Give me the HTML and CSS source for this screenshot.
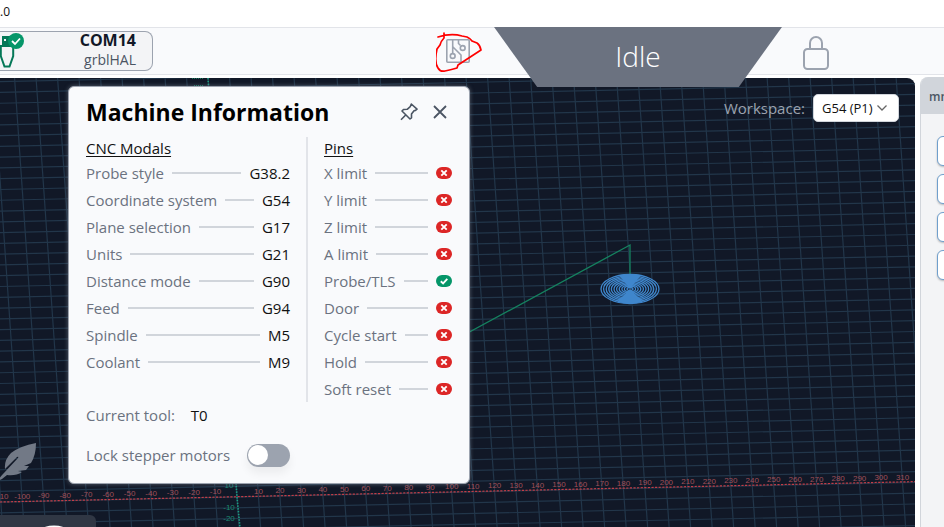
FILE: index.html
```html
<!DOCTYPE html>
<html lang="en">
<head>
<meta charset="utf-8">
<title>Machine control</title>
<link rel="stylesheet" href="styles.css">
</head>
<body>
<svg width="0" height="0" class="defs" aria-hidden="true">
  <symbol id="bad" viewBox="0 0 16 12">
    <rect width="16" height="12" rx="6" fill="#dc2626"/>
    <path d="M5.3 3.3l5.4 5.4M10.7 3.3L5.3 8.7" stroke="#fff" stroke-width="1.9" fill="none"/>
  </symbol>
  <symbol id="good" viewBox="0 0 16 12">
    <rect width="16" height="12" rx="6" fill="#059669"/>
    <path d="M4.8 6.2l2.3 2.2 4.2-4.5" stroke="#fff" stroke-width="1.9" fill="none"/>
  </symbol>
</svg>
<div class="app">
  <div class="titlebar">.0</div>
  <header class="toolbar">
    <div class="toolbar-left">
      <button class="port" type="button">
        <svg class="usb" width="26" height="38" viewBox="0 0 26 38" aria-hidden="true">
          <rect x="2" y="4" width="11" height="9" fill="#047857"/>
          <path d="M4 7h2v2H4zM9 7h2v2H9z" fill="#f3f4f6"/>
          <path d="M.8 14h12.400v10L9.500 34.500h-5L.8 24z" fill="#f3f4f6" stroke="#047857" stroke-width="2"/>
          <circle cx="16" cy="9" r="8" fill="#059669"/>
          <path d="M12 9l3 3 5-5.500" fill="none" stroke="#fff" stroke-width="1.800"/>
        </svg>
        <span class="port-text"><strong>COM14</strong><span>grblHAL</span></span>
      </button>
      <button class="circuit" type="button" aria-label="Machine information">
        <svg width="24" height="24" viewBox="0 0 24 24" fill="none" stroke="#9ca3af" stroke-width="1.600">
          <rect x=".8" y=".8" width="22.400" height="22.400" rx="1"/>
          <path d="M6.700 1v13.500M7 8l8 8v7M12.500 1v3.500l2 2"/>
          <circle cx="6.700" cy="17" r="2.400"/><circle cx="16.700" cy="9" r="2.400"/>
        </svg>
        <svg class="scribble" width="48" height="42" viewBox="0 0 48 42" fill="none" stroke="#f00" stroke-width="1.700" stroke-linecap="round" stroke-linejoin="round">
          <path d="M2 5q13-4 24-1l5 1q4 2 5 4l5 2q3 2 4 7l-23 15-1 3q-7 2-12 3-5 1-7-3-4-6-1-19l3-4q1-4 4-7V1"/>
        </svg>
      </button>
    </div>
    <div class="status">Idle</div>
    <div class="toolbar-right">
      <button class="lock" type="button" aria-label="Lock">
        <svg width="26" height="36" viewBox="0 0 26 36" fill="none" stroke="#9ca3af" stroke-width="2">
          <rect x="1" y="14" width="24" height="20" rx="3.500"/>
          <path d="M7 14V8a6 6 0 0 1 12 0v6"/>
        </svg>
      </button>
    </div>
  </header>
  <main class="main">
    <section class="viewer">
      <svg class="scene" id="scene" aria-hidden="true">
        <g id="grid" stroke="#22364a" stroke-width="1.200"></g>
        <path d="M0 424L1840 383" stroke="#c43c46" stroke-width="1.200" stroke-dasharray="2.200 1.400"/>
        <path d="M208 0L237 419L240 450" fill="none" stroke="#1b9e84" stroke-width="1.600" stroke-dasharray="1.500 1.300"/>
        <g id="ticks"></g>
        <path d="M192 .5h12M194 7.500h10" stroke="#14795e" stroke-dasharray="1 1"/>
        <path d="M440 270L630 167V196" fill="none" stroke="#15825f" stroke-width="1.300"/>
        <g id="rings" fill="none" stroke="#3f86cc" stroke-width="1.300"></g>
        <path d="M630 211L619 197Q630 195 641 197ZM630 211L617 224Q630 227 643 224Z" fill="#3f86cc"/>
      </svg>
      <div class="workspace">
        <label for="ws">Workspace:</label>
        <span class="select">
          <select id="ws"><option>G54 (P1)</option></select>
          <svg width="12" height="8" viewBox="0 0 12 8" fill="none" stroke="#666" stroke-width="1.300"><path d="M1.500 1.500L6 6l4.500-4.500"/></svg>
        </span>
      </div>
      <svg class="feather" width="37" height="38" viewBox="0 0 37 38" fill="#727986" aria-hidden="true">
        <path d="M36 0Q20 3 11 10 4 17 5 26L17 14q2-1 1 1L3 31q-5 5-3 6l2-1 5-4q9 1 15-3l-4-1 8-1 3-4-5 0 7-3Q36 12 36 0z"/>
      </svg>
      <div class="dock">
        <svg width="20" height="12" viewBox="0 0 20 12" aria-hidden="true"><ellipse cx="10" cy="15" rx="12" ry="4.500" fill="#fff"/></svg>
      </div>
      <section class="dialog" aria-labelledby="dlg-title">
        <div class="dialog-head">
          <h2 id="dlg-title">Machine Information</h2>
          <button type="button" aria-label="Pin">
            <svg width="18" height="18" viewBox="0 0 18 18" fill="none" stroke="#4b5563" stroke-width="1.600" stroke-linejoin="round"><path d="M11.300 1l5.700 5.200-1.500 1.200-1.500.3-2.500 3.300v3.800l-1.500 1.200L2 8l1.500-1.500 3.700-.2 3-2.600zM5.700 12L1 16.700"/></svg>
          </button>
          <button type="button" aria-label="Close">
            <svg width="14" height="14" viewBox="0 0 14 14" fill="none" stroke="#4b5563" stroke-width="1.800"><path d="M1 1l12 12M13 1L1 13"/></svg>
          </button>
        </div>
        <div class="columns">
          <div class="modals">
            <h3>CNC Modals</h3>
            <dl>
              <div><dt>Probe style</dt><dd>G38.2</dd></div>
              <div><dt>Coordinate system</dt><dd>G54</dd></div>
              <div><dt>Plane selection</dt><dd>G17</dd></div>
              <div><dt>Units</dt><dd>G21</dd></div>
              <div><dt>Distance mode</dt><dd>G90</dd></div>
              <div><dt>Feed</dt><dd>G94</dd></div>
              <div><dt>Spindle</dt><dd>M5</dd></div>
              <div><dt>Coolant</dt><dd>M9</dd></div>
            </dl>
          </div>
          <div class="pins">
            <h3>Pins</h3>
            <dl>
              <div><dt>X limit</dt><dd><svg><use href="#bad"/></svg></dd></div>
              <div><dt>Y limit</dt><dd><svg><use href="#bad"/></svg></dd></div>
              <div><dt>Z limit</dt><dd><svg><use href="#bad"/></svg></dd></div>
              <div><dt>A limit</dt><dd><svg><use href="#bad"/></svg></dd></div>
              <div><dt>Probe/TLS</dt><dd><svg><use href="#good"/></svg></dd></div>
              <div><dt>Door</dt><dd><svg><use href="#bad"/></svg></dd></div>
              <div><dt>Cycle start</dt><dd><svg><use href="#bad"/></svg></dd></div>
              <div><dt>Hold</dt><dd><svg><use href="#bad"/></svg></dd></div>
              <div><dt>Soft reset</dt><dd><svg><use href="#bad"/></svg></dd></div>
            </dl>
          </div>
        </div>
        <p class="tool">Current tool: <b>T0</b></p>
        <div class="motors">
          <label for="motors">Lock stepper motors</label>
          <input id="motors" type="checkbox" role="switch">
        </div>
      </section>
    </section>
    <aside class="side">
      <div class="side-head">mm</div>
      <div class="fields">
        <button type="button" aria-label="Zero X"></button>
        <button type="button" aria-label="Zero Y"></button>
        <button type="button" aria-label="Zero Z"></button>
        <button type="button" aria-label="Zero A"></button>
      </div>
    </aside>
  </main>
</div>
<script src="scene.js"></script>
</body>
</html>
```
FILE: styles.css
```css
* { box-sizing: border-box; }
body {
  margin: 0;
  font-family: "Open Sans", "Noto Sans", sans-serif;
  font-size: 15px;
  background: #fff;
  color: #111827;
}
button { border: 0; padding: 0; background: none; font: inherit; color: inherit; }
svg { display: block; }
h2, h3, p, dl, dd { margin: 0; }
.defs { position: absolute; }
.app { display: flex; flex-direction: column; height: 100vh; overflow: hidden; }
.titlebar { height: 27px; font-size: 12px; line-height: 24px; color: #111; flex: none; }

.toolbar {
  display: flex;
  flex: none;
  height: 48px;
  background: #f9fafc;
  border-top: 1px solid #e2e4e9;
  border-bottom: 1px solid #e2e4e9;
}
.toolbar-left { flex: 10 1 0; display: flex; align-items: center; justify-content: space-between; padding-right: 24px; }
.port {
  display: flex;
  align-items: center;
  justify-content: space-between;
  width: 153px;
  height: 40px;
  padding-right: 16px;
  background: #f3f4f6;
  border: 1px solid #9ca3af;
  border-left: 0;
  border-radius: 0 8px 8px 0;
}
.port-text { display: flex; flex-direction: column; align-items: flex-end; line-height: 21px; font-size: 14px; color: #4b5563; }
.port-text strong { font-size: 16px; line-height: 17px; color: #111827; }
.circuit { position: relative; }
.scribble { position: absolute; left: -10px; top: -7px; }
.status {
  position: relative;
  z-index: 2;
  width: 288px;
  height: 60px;
  margin-top: -1px;
  background: #6b7280;
  clip-path: polygon(0 0, 100% 0, 85% 100%, 15% 100%);
  color: #fff;
  font-size: 28px;
  font-weight: 300;
  line-height: 59px;
  text-align: center;
}
.toolbar-right { flex: 3 1 0; display: flex; align-items: center; padding: 4px 0 0 21px; }

.main { flex: 1; display: flex; gap: 5px; min-height: 0; padding-top: 3px; }
.viewer { position: relative; flex: 1; min-width: 0; background: #111827; border-top-right-radius: 8px; overflow: hidden; }
.scene { position: absolute; inset: 0; width: 100%; height: 100%; }
.tick { font-family: "Liberation Sans", sans-serif; font-size: 8px; text-anchor: middle; }
.tick-x { fill: #a04f58; }
.tick-y { fill: #1a8a72; }

.workspace { position: absolute; right: 16px; top: 16px; display: flex; align-items: center; gap: 8px; color: #9ca3af; }
.select { position: relative; display: flex; align-items: center; }
.select select {
  appearance: none;
  width: 86px;
  height: 28px;
  padding: 0 8px;
  border: 1px solid #d1d5db;
  border-radius: 5px;
  background: #fff;
  color: #111;
  font: inherit;
  font-size: 13px;
}
.select svg { position: absolute; right: 11px; pointer-events: none; }
.feather { position: absolute; left: 0; top: 365px; }
.dock { position: absolute; left: 0; top: 437px; width: 96px; height: 60px; padding-left: 44px; border-radius: 0 6px 0 0; background: #303744; }

.dialog {
  position: absolute;
  left: 68px;
  top: 8px;
  width: 402px;
  padding: 0 17px 16px;
  border: 1px solid #9ca3af;
  border-radius: 6px;
  background: #f9fafc;
  box-shadow: 0 0 4px rgba(156, 163, 175, .5);
}
.dialog-head { display: flex; align-items: center; gap: 15px; height: 50px; padding-right: 5px; }
.dialog h2 { flex: 1; font-size: 23px; line-height: 32px; color: #000; }
.columns { display: flex; }
.modals { width: 220px; padding-right: 16px; }
.pins { flex: 1; padding-left: 16px; border-left: 2px solid #e2e4e9; }
.dialog h3 { font-size: 15px; font-weight: 400; line-height: 22px; text-decoration: underline; text-underline-offset: 2px; color: #111; }
.dialog dl div { display: flex; align-items: center; gap: 8px; height: 27px; }
.dialog dt { color: #6b7280; }
.dialog dl div::before { content: ""; order: 1; flex: 1; height: 2px; background: #d1d5db; }
.dialog dd { order: 2; color: #111; }
.dialog dd svg { width: 16px; height: 12px; }
.tool { color: #6b7280; line-height: 26px; }
.tool b { margin-left: 12px; font-weight: 400; color: #111; }
.motors { display: flex; align-items: center; justify-content: space-between; width: 204px; height: 24px; margin-top: 15px; color: #6b7280; }
.motors input {
  appearance: none;
  width: 43px;
  height: 23px;
  margin: 0;
  padding: 1px;
  border-radius: 12px;
  background: #9ca3af;
  box-shadow: 0 6px 10px rgba(0, 0, 0, .06);
}
.motors input::before { content: ""; display: block; width: 20px; height: 20px; border-radius: 50%; background: #fff; }
.motors input:checked::before { margin-left: auto; }

.side { flex: 0 0 24px; overflow: hidden; margin-top: -1px; background: #f3f4f6; border-left: 1px solid #d1d5db; border-top-left-radius: 8px; }
.side-head { height: 37px; padding-left: 8px; background: #d1d5db; color: #4b5563; font-size: 12px; font-weight: 600; line-height: 40px; }
.fields { display: flex; flex-direction: column; gap: 8px; padding: 22px 0 0 16px; }
.fields button { width: 60px; height: 30px; border: 1px solid #6f9fcd; border-radius: 6px; background: #fff; box-shadow: 0 1px 2px rgba(0, 0, 0, .25); }
```
FILE: scene.js
```js
const NS = "http://www.w3.org/2000/svg";

function add(parentId, tag, attrs, text) {
  const el = document.createElementNS(NS, tag);
  for (const key in attrs) el.setAttribute(key, attrs[key]);
  if (text) el.textContent = text;
  document.getElementById(parentId).appendChild(el);
}

// Origin and cell size of the work plane on screen
const ORIGIN = { x: 237, y: 419 };
const STEP_X = 21.47;
const STEP_Y = 10.78;
const SLOPE_X = -0.0215;
const SLOPE_Y = 0.069;

for (let i = -20; i < 90; i++) {
  const x = ORIGIN.x + i * STEP_X;
  const y = ORIGIN.y + i * STEP_X * SLOPE_X;
  add("grid", "line", { x1: x - 600 * SLOPE_Y, y1: y - 600, x2: x + 800 * SLOPE_Y, y2: y + 800 });
  if (i !== 0 && i >= -11 && i <= 31) {
    add("ticks", "text", { x: x, y: y - 3, class: "tick tick-x" }, String(i * 10));
  }
}

for (let j = -60; j < 90; j++) {
  const y = ORIGIN.y + j * STEP_Y - ORIGIN.x * SLOPE_X;
  add("grid", "line", { x1: 0, y1: y, x2: 1840, y2: y + 1840 * SLOPE_X });
}

[[10, 410], [-10, 432], [-20, 443]].forEach(([value, y]) => {
  add("ticks", "text", { x: 229, y: y, class: "tick tick-y" }, String(value));
});

for (let r = 29; r > 2; r -= 2.6) {
  add("rings", "ellipse", { cx: 630, cy: 211, rx: r, ry: r / 2 });
}
```
